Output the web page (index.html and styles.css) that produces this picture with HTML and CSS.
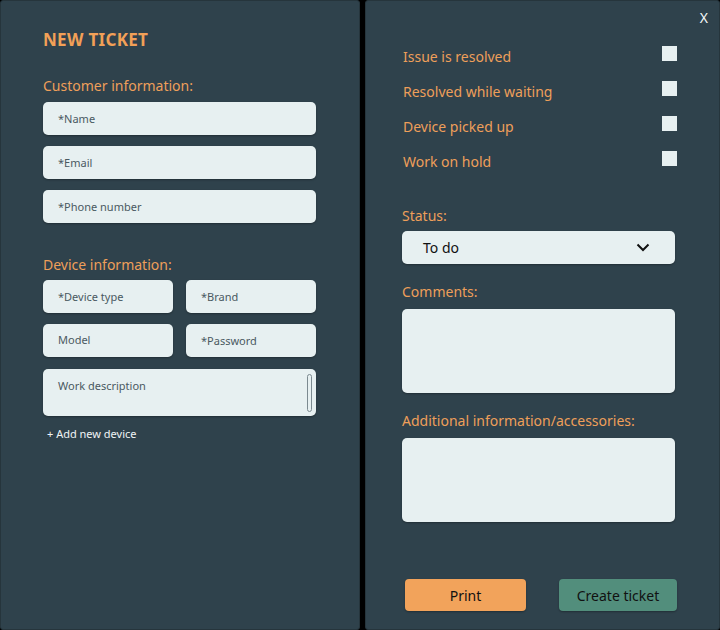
FILE: index.html
```html
<!DOCTYPE html>
<html>
<head>
<meta charset="utf-8">
<link rel="stylesheet" href="styles.css">
</head>
<body>
<div class="modal">
  <section class="panel left">
    <h1 class="title">NEW TICKET</h1>
    <h2 class="label first">Customer information:</h2>
    <div class="stack">
      <div class="field">*Name</div>
      <div class="field">*Email</div>
      <div class="field">*Phone number</div>
    </div>
    <h2 class="label device">Device information:</h2>
    <div class="grid">
      <div class="field">*Device type</div>
      <div class="field">*Brand</div>
      <div class="field model">Model</div>
      <div class="field">*Password</div>
      <div class="field area wide">Work description<span class="scroll"></span></div>
    </div>
    <div class="add">+ Add new device</div>
  </section>
  <section class="panel right">
    <div class="close">X</div>
    <div class="checks">
      <div class="check"><span class="ctext">Issue is resolved</span><span class="box"></span></div>
      <div class="check"><span class="ctext">Resolved while waiting</span><span class="box"></span></div>
      <div class="check"><span class="ctext">Device picked up</span><span class="box"></span></div>
      <div class="check"><span class="ctext">Work on hold</span><span class="box"></span></div>
    </div>
    <h2 class="label status">Status:</h2>
    <div class="select"><span>To do</span>
      <svg width="14" height="9" viewBox="0 0 14 9"><path d="M1.5 1.5 L7 7 L12.5 1.5" fill="none" stroke="#111" stroke-width="2"/></svg>
    </div>
    <h2 class="label comments">Comments:</h2>
    <div class="textbox"></div>
    <h2 class="label addl">Additional information/accessories:</h2>
    <div class="textbox"></div>
    <div class="buttons">
      <button class="btn print">Print</button>
      <button class="btn create">Create ticket</button>
    </div>
  </section>
</div>
</body>
</html>
```
FILE: styles.css
```css
* { box-sizing: border-box; }
html, body { margin: 0; padding: 0; }
body {
  background: #000;
  font-family: "Noto Sans", "DejaVu Sans", sans-serif;
  width: 720px;
  height: 630px;
  overflow: hidden;
}
.modal {
  display: flex;
  gap: 5px;
  height: 630px;
}
.panel {
  background: #2f424c;
  border: 1px solid #26353c;
  height: 630px;
  position: relative;
}
.left {
  width: 360px;
  border-radius: 3px;
  padding: 29px 0 0 42px;
}
.right {
  width: 355px;
  border-radius: 3px;
  padding: 0 0 0 36px;
}
.title {
  margin: 0;
  font-size: 17px;
  line-height: 20px;
  font-weight: 700;
  color: #f2a057;
  letter-spacing: 0.3px;
}
.label {
  margin: 0;
  font-size: 14px;
  line-height: 18px;
  font-weight: 400;
  color: #ee9f5a;
}
.label.first { margin-top: 27px; }
.stack {
  display: flex;
  flex-direction: column;
  gap: 11px;
  margin-top: 7px;
  width: 273px;
}
.field {
  background: #e7f0f1;
  border-radius: 5px;
  height: 33px;
  font-size: 11px;
  line-height: 33px;
  color: #4a5961;
  padding-left: 15px;
  box-shadow: 0 1px 2px rgba(0,0,0,0.3);
  position: relative;
}
.field.model { line-height: 31px; }
.label.device { margin-top: 33px; }
.grid {
  display: grid;
  grid-template-columns: 130px 130px;
  column-gap: 13px;
  row-gap: 11px;
  margin-top: 6px;
  width: 273px;
}
.wide { grid-column: 1 / 3; }
.area {
  height: 47px;
  line-height: 16px;
  padding-top: 9px;
  margin-top: 1px;
}
.scroll {
  position: absolute;
  right: 4px;
  top: 5px;
  width: 5px;
  height: 38px;
  border: 1px solid #7c8a90;
  border-radius: 3px;
}
.add {
  margin-top: 11px;
  margin-left: 4px;
  font-size: 11px;
  line-height: 14px;
  color: #f0f4f5;
}
.close {
  position: absolute;
  top: 9px;
  right: 11px;
  color: #f4f7f8;
  font-size: 14px;
  line-height: 16px;
}
.checks {
  display: flex;
  flex-direction: column;
  gap: 17px;
  margin-top: 47px;
  width: 275px;
}
.check {
  display: flex;
  justify-content: space-between;
  align-items: flex-start;
  height: 18px;
}
.ctext {
  font-size: 14px;
  line-height: 18px;
  color: #ee9f5a;
  margin-left: 1px;
}
.box {
  width: 15px;
  height: 15px;
  margin-top: -2px;
  background: #e7f0f1;
}
.label.status { margin-top: 36px; }
.select {
  margin-top: 6px;
  width: 273px;
  height: 33px;
  background: #e7f0f1;
  border-radius: 5px;
  display: flex;
  align-items: center;
  justify-content: space-between;
  padding: 0 25px 0 21px;
  font-size: 14px;
  color: #111;
  box-shadow: 0 1px 2px rgba(0,0,0,0.3);
}
.label.comments { margin-top: 19px; }
.label.addl { margin-top: 19px; }
.textbox {
  margin-top: 8px;
  width: 273px;
  height: 84px;
  background: #e7f0f1;
  border-radius: 5px;
  box-shadow: 0 1px 2px rgba(0,0,0,0.3);
}
.buttons {
  display: flex;
  gap: 33px;
  margin-top: 57px;
  margin-left: 3px;
}
.btn {
  border: none;
  border-radius: 4px;
  height: 32px;
  font-family: inherit;
  font-size: 14px;
  color: #111;
  box-shadow: 0 1px 2px rgba(0,0,0,0.3);
  padding: 0;
}
.print { width: 121px; background: #f2a35b; }
.create { width: 118px; background: #528e7c; }
```
